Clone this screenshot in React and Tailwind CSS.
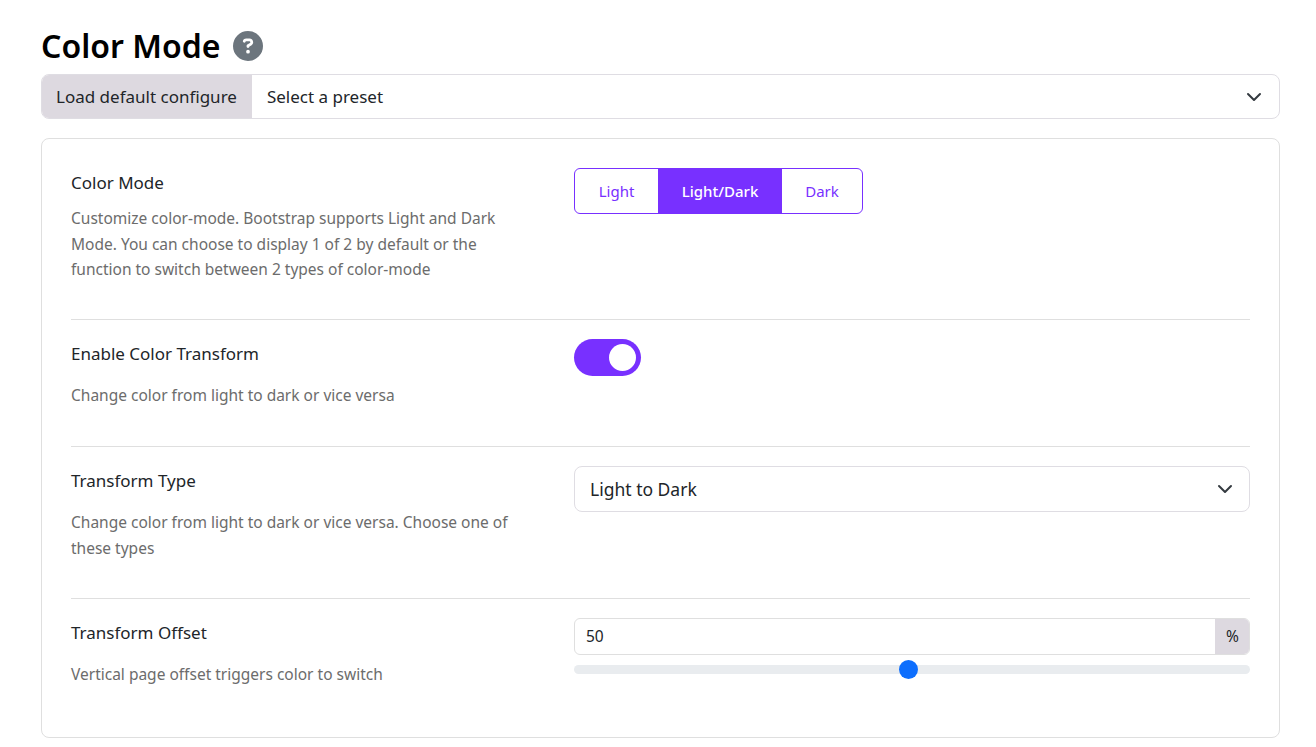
import { FaCircleQuestion } from 'react-icons/fa6';

function Chevron() {
  return (
    <svg viewBox="0 0 16 16" className="w-4 h-4 text-[#343a40]" fill="none" stroke="currentColor" strokeWidth="2" strokeLinecap="round" strokeLinejoin="round">
      <path d="m2 5 6 6 6-6" />
    </svg>
  );
}

function Row({ title, desc, titleClass, className, children }) {
  return (
    <div className={`grid grid-cols-[503px_1fr] ${className}`}>
      <div>
        <div className={`text-[17px] leading-[26px] text-[#212529] ${titleClass}`}>{title}</div>
        <p className="w-[460px] text-[15.5px] leading-[25.5px] text-[#6c6c6c]">{desc}</p>
      </div>
      <div>{children}</div>
    </div>
  );
}

export default function App() {
  return (
    <div className="min-h-screen bg-white pl-[41px] pr-[36px] font-['Noto_Sans',sans-serif]">
      <div className="flex items-center h-[74px] pt-[18px] gap-[13px]">
        <h1 className="text-[32px] leading-[56px] font-semibold text-black">Color Mode</h1>
        <FaCircleQuestion className="text-[#6c757d] w-[30px] h-[30px]" />
      </div>

      <div className="flex h-[45px] border border-[#dfdde3] rounded-lg overflow-hidden">
        <div className="flex items-center px-[15px] bg-[#ddd9e0] text-[17px] text-[#212529] -my-px -ml-px">Load default configure</div>
        <div className="flex-1 flex items-center justify-between pl-[15px] pr-[17px] text-[17px] text-[#212529]">
          <span>Select a preset</span>
          <Chevron />
        </div>
      </div>

      <div className="mt-[19px] h-[600px] border border-[#dfdfdf] rounded-lg px-[29px]">
        <Row
          title="Color Mode"
          titleClass="mb-[10px]"
          className="h-[181px] border-b border-[#dfdfdf] pt-[31px]"
          desc="Customize color-mode. Bootstrap supports Light and Dark Mode. You can choose to display 1 of 2 by default or the function to switch between 2 types of color-mode"
        >
          <div className="-mt-[2px] inline-flex h-[46px] border border-[#7830ff] rounded-md overflow-hidden text-[15px] text-[#7830ff]">
            <div className="w-[83px] flex items-center justify-center">Light</div>
            <div className="w-[124px] flex items-center justify-center bg-[#7830ff] text-white font-medium">Light/Dark</div>
            <div className="w-[80px] flex items-center justify-center">Dark</div>
          </div>
        </Row>

        <Row
          title="Enable Color Transform"
          titleClass="mb-[16px]"
          className="h-[127px] border-b border-[#dfdfdf] pt-[21px]"
          desc="Change color from light to dark or vice versa"
        >
          <div className="-mt-[2px] w-[67px] h-[37px] rounded-full bg-[#7830ff] flex items-center justify-end pr-[5px]">
            <div className="w-[27px] h-[27px] rounded-full bg-white" />
          </div>
        </Row>

        <Row
          title="Transform Type"
          titleClass="mb-[16px]"
          className="h-[152px] border-b border-[#dfdfdf] pt-[21px]"
          desc="Change color from light to dark or vice versa. Choose one of these types"
        >
          <div className="-mt-[2px] h-[46px] border border-[#dfdde3] rounded-lg flex items-center justify-between pl-[15px] pr-[16px] text-[17.5px] text-[#212529]">
            <span>Light to Dark</span>
            <Chevron />
          </div>
        </Row>

        <Row
          title="Transform Offset"
          titleClass="mb-[16px]"
          className="pt-[21px]"
          desc="Vertical page offset triggers color to switch"
        >
          <div className="-mt-[2px] h-[37px] flex border border-[#dfdfdf] rounded-md overflow-hidden text-[15.5px] text-[#212529]">
            <div className="flex-1 flex items-center pl-[11px]">50</div>
            <div className="w-[35px] -my-px -mr-px bg-[#ddd9e0] flex items-center justify-center">%</div>
          </div>
          <div className="relative mt-[10px] h-[9px] rounded-full bg-[#e9ecef]">
            <div className="absolute left-[325px] -top-[5px] w-[19px] h-[19px] rounded-full bg-[#0d6efd]" />
          </div>
        </Row>
      </div>
    </div>
  );
}
